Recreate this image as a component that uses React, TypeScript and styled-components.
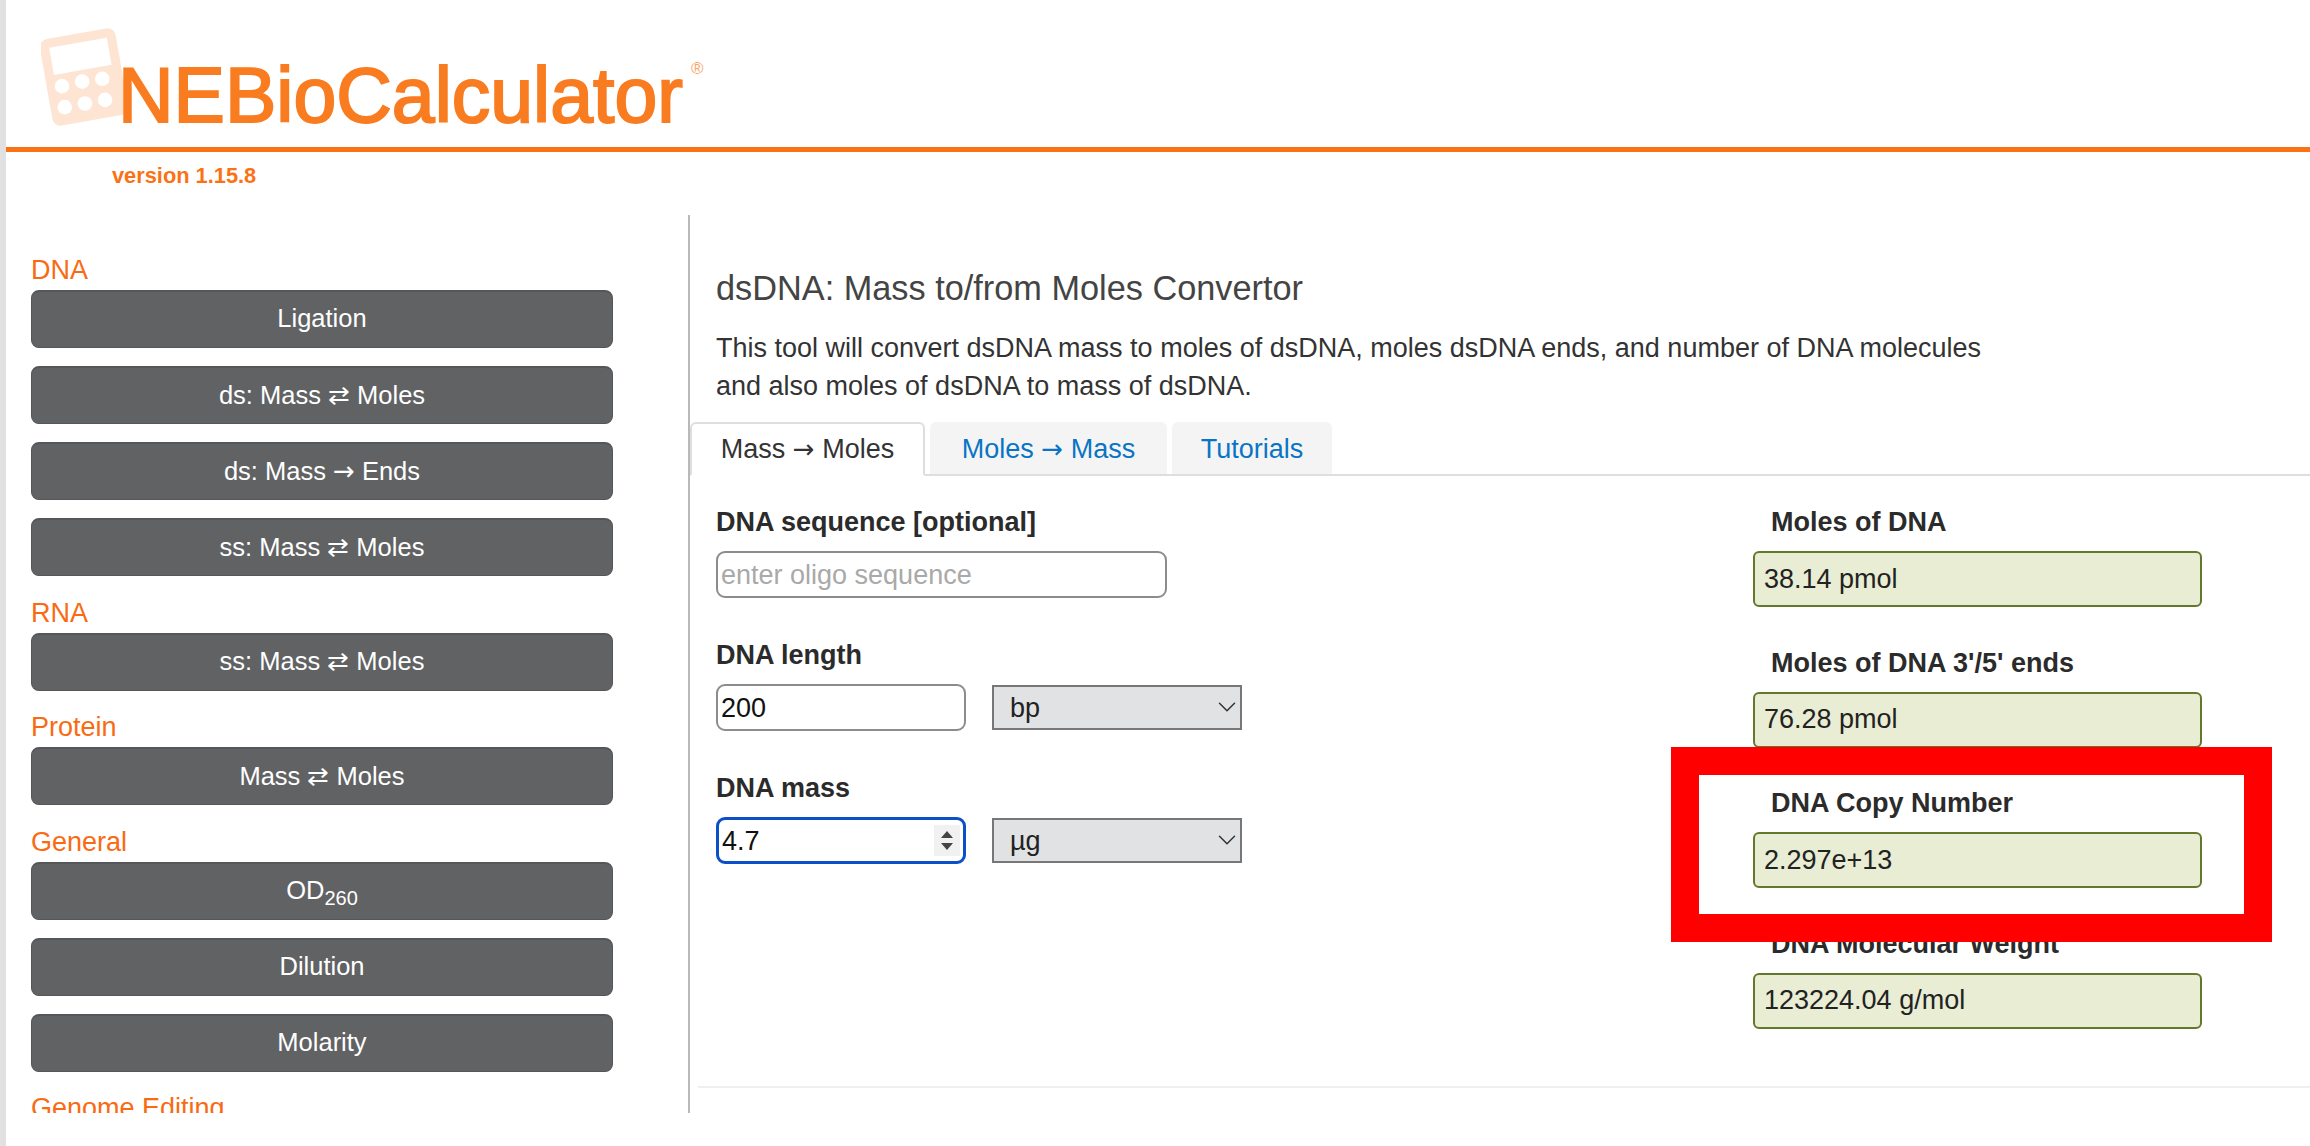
import React from 'react'
import styled, { createGlobalStyle } from 'styled-components'
import { ChevronDown } from 'lucide-react'

const GlobalStyle = createGlobalStyle`
  html, body {
    margin: 0;
    padding: 0;
    background: #fff;
  }

  * {
    box-sizing: border-box;
  }
`

const Page = styled.div`
  position: relative;
  width: 2310px;
  height: 1146px;
  overflow: hidden;
  border-left: 6px solid #e1e1e1;
  font-family: 'Liberation Sans', Arial, sans-serif;
  font-size: 27px;
  color: #333;
`

const Header = styled.header`
  position: relative;
  height: 152px;
  padding: 52px 0 0 112px;
  border-bottom: 5px solid #f97316;
`

const LogoMark = styled.svg`
  position: absolute;
  left: 35px;
  top: 28px;
  width: 86px;
  height: 98px;
`

const LogoText = styled.div`
  position: relative;
  display: inline-block;
  font-size: 77px;
  line-height: 87px;
  color: #f97c20;
  -webkit-text-stroke: 2px #f97c20;

  sup {
    position: absolute;
    left: 100%;
    top: 8px;
    margin-left: 8px;
    font-size: 17px;
    line-height: 18px;
    color: #f9a56a;
    -webkit-text-stroke: 0;
  }
`

const Version = styled.div`
  height: 63px;
  padding: 11px 0 0 106px;
  font-size: 21.8px;
  line-height: 26px;
  font-weight: bold;
  color: #f97316;
`

const Columns = styled.div`
  display: flex;
`

const Sidebar = styled.nav`
  flex: none;
  width: 684px;
  height: 898px;
  overflow: hidden;
  padding: 40px 0 0 25px;
  border-right: 2px solid #b9b9b9;
`

const GroupTitle = styled.div`
  height: 35px;
  font-size: 27px;
  line-height: 30px;
  color: #f96a12;
`

const NavGroup = styled.div`
  margin-bottom: 21.5px;
`

const NavButton = styled.div`
  display: flex;
  align-items: center;
  justify-content: center;
  width: 582px;
  height: 58px;
  margin-bottom: 18px;
  padding-bottom: 2px;
  border: 1px solid #55565a;
  border-top-width: 2px;
  border-radius: 8px;
  background: #616264;
  color: #fff;
  font-size: 25.5px;

  &:last-child {
    margin-bottom: 0;
  }

  sub {
    font-size: 20px;
    line-height: 0;
    vertical-align: -6px;
  }
`

const Main = styled.main`
  flex: 1;
  min-width: 0;
  padding-top: 54px;
`

const Intro = styled.div`
  padding-left: 26px;
`

const Title = styled.h1`
  margin: 0 0 22px;
  font-size: 34.3px;
  line-height: 38px;
  font-weight: normal;
  color: #444;
`

const Lead = styled.p`
  margin: 0;
  width: 1320px;
  font-size: 27px;
  line-height: 38px;
  color: #333;
`

const TabBar = styled.div`
  display: flex;
  gap: 5px;
  height: 54px;
  margin-top: 17px;
  border-bottom: 2px solid #dedede;
`

const Tab = styled.div<{ $active?: boolean; $width: number }>`
  display: flex;
  align-items: center;
  justify-content: center;
  width: ${p => p.$width}px;
  height: ${p => (p.$active ? 54 : 52)}px;
  border: 2px solid ${p => (p.$active ? '#dedede' : '#f4f4f4')};
  border-bottom: ${p => (p.$active ? '2px solid #fff' : 'none')};
  border-radius: 6px 6px 0 0;
  background: ${p => (p.$active ? '#fff' : '#f4f4f4')};
  color: ${p => (p.$active ? '#333' : '#0a74c4')};
  font-size: 27px;
`

const Arrow = styled.span`
  font-family: 'DejaVu Sans', sans-serif;
  font-size: 26px;
`

const Panel = styled.div`
  display: flex;
  justify-content: space-between;
  padding: 30px 0 57px 27px;
  border-bottom: 2px solid #efefef;
  margin-left: 8px;
`

const FormColumn = styled.div`
  display: flex;
  flex-direction: column;
  gap: 41px;
  margin-left: -9px;
`

const ResultColumn = styled.div`
  display: flex;
  flex-direction: column;
  gap: 39.5px;
  width: 557px;
`

const FieldLabel = styled.div<{ $indent?: boolean }>`
  height: 30px;
  margin-bottom: 15px;
  padding-top: 1px;
  padding-left: ${p => (p.$indent ? 18 : 0)}px;
  font-size: 27px;
  line-height: 30px;
  font-weight: bold;
  color: #2b2b2b;
`

const InputRow = styled.div`
  display: flex;
  align-items: center;
  gap: 26px;
`

const InputBox = styled.div`
  position: relative;
  flex: none;
`

const TextInput = styled.input<{ $width: number; $focused?: boolean }>`
  display: block;
  width: ${p => p.$width}px;
  height: 47px;
  padding: 2px 3px 0;
  border: ${p => (p.$focused ? '3px solid #0b50c8' : '2px solid #8c8c8c')};
  border-radius: 9px;
  outline: none;
  background: #fff;
  font-family: inherit;
  font-size: 27px;
  color: #111;

  &::placeholder {
    color: #a9a9a9;
    opacity: 1;
  }
`

const Spinner = styled.svg`
  position: absolute;
  right: 6px;
  top: 8px;
  width: 26px;
  height: 31px;
`

const SelectBox = styled.div`
  position: relative;
  width: 250px;
  height: 45px;

  svg {
    position: absolute;
    right: 0;
    top: 7px;
    color: #333;
    pointer-events: none;
  }
`

const UnitSelect = styled.select`
  display: block;
  width: 100%;
  height: 100%;
  padding: 0 0 0 16px;
  border: 2px solid #777;
  border-radius: 0;
  outline: none;
  appearance: none;
  background: #e1e2e3;
  font-family: inherit;
  font-size: 27px;
  color: #222;
`

const ResultField = styled.div`
  display: flex;
  align-items: center;
  width: 449px;
  height: 56px;
  padding-left: 9px;
  border: 2px solid #64782d;
  border-radius: 6px;
  background: #e8edd3;
  font-size: 27px;
  color: #222;
`

const Highlight = styled.div`
  position: absolute;
  left: 1665px;
  top: 747px;
  width: 601px;
  height: 195px;
  border: 28px solid #ff0000;
  pointer-events: none;
`

const BOTH = '\u21C4'
const TO = '\u2192'

const navGroups = [
  {
    title: 'DNA',
    items: ['Ligation', `ds: Mass ${BOTH} Moles`, `ds: Mass ${TO} Ends`, `ss: Mass ${BOTH} Moles`],
  },
  { title: 'RNA', items: [`ss: Mass ${BOTH} Moles`] },
  { title: 'Protein', items: [`Mass ${BOTH} Moles`] },
  { title: 'General', items: ['OD260', 'Dilution', 'Molarity'] },
  { title: 'Genome Editing', items: [] },
]

const results = [
  { label: 'Moles of DNA', value: '38.14 pmol' },
  { label: "Moles of DNA 3'/5' ends", value: '76.28 pmol' },
  { label: 'DNA Copy Number', value: '2.297e+13' },
  { label: 'DNA Molecular Weight', value: '123224.04 g/mol' },
]

const navLabel = (item: string) => {
  if (item === 'OD260') {
    return (
      <span>
        OD<sub>260</sub>
      </span>
    )
  }
  if (item.includes(TO)) {
    const [before, after] = item.split(TO)
    return (
      <span>
        {before}
        <Arrow>{TO}</Arrow>
        {after}
      </span>
    )
  }
  return item
}

const Unit: React.FC<{ value: string }> = ({ value }) => (
  <SelectBox>
    <UnitSelect value={value} onChange={() => undefined}>
      <option value={value}>{value}</option>
    </UnitSelect>
    <ChevronDown size={30} strokeWidth={1.2} />
  </SelectBox>
)

const App: React.FC = () => {
  return (
    <Page>
      <GlobalStyle />

      <Header>
        <LogoMark viewBox='0 0 94 106'>
          <g transform='rotate(-10 47 53)' fill='#fde4d3'>
            <path
              fillRule='evenodd'
              d='M14 5h66a9 9 0 0 1 9 9v78a9 9 0 0 1-9 9H14a9 9 0 0 1-9-9V14a9 9 0 0 1 9-9zm1 10v30h64V15z'
            />
          </g>
          <g fill='#fff'>
            <circle cx='23' cy='63' r='8' />
            <circle cx='45' cy='58' r='8' />
            <circle cx='67' cy='55' r='8' />
            <circle cx='26' cy='86' r='8' />
            <circle cx='48' cy='82' r='8' />
            <circle cx='70' cy='78' r='8' />
          </g>
        </LogoMark>
        <LogoText>
          NEBioCalculator<sup>®</sup>
        </LogoText>
      </Header>

      <Version>version 1.15.8</Version>

      <Columns>
        <Sidebar>
          {navGroups.map(group => (
            <NavGroup key={group.title}>
              <GroupTitle>{group.title}</GroupTitle>
              {group.items.map(item => (
                <NavButton key={item}>{navLabel(item)}</NavButton>
              ))}
            </NavGroup>
          ))}
        </Sidebar>

        <Main>
          <Intro>
            <Title>dsDNA: Mass to/from Moles Convertor</Title>
            <Lead>
              This tool will convert dsDNA mass to moles of dsDNA, moles dsDNA ends, and number of DNA molecules
              <br />
              and also moles of dsDNA to mass of dsDNA.
            </Lead>
          </Intro>

          <TabBar>
            <Tab $active $width={235}>
              <span>
                Mass <Arrow>{TO}</Arrow> Moles
              </span>
            </Tab>
            <Tab $width={237}>
              <span>
                Moles <Arrow>{TO}</Arrow> Mass
              </span>
            </Tab>
            <Tab $width={160}>Tutorials</Tab>
          </TabBar>

          <Panel>
            <FormColumn>
              <div>
                <FieldLabel>DNA sequence [optional]</FieldLabel>
                <InputRow>
                  <TextInput $width={451} placeholder='enter oligo sequence' />
                </InputRow>
              </div>
              <div>
                <FieldLabel>DNA length</FieldLabel>
                <InputRow>
                  <TextInput $width={250} defaultValue='200' />
                  <Unit value='bp' />
                </InputRow>
              </div>
              <div>
                <FieldLabel>DNA mass</FieldLabel>
                <InputRow>
                  <InputBox>
                    <TextInput $width={250} $focused defaultValue='4.7' />
                    <Spinner viewBox='0 0 26 31'>
                      <rect width='26' height='31' fill='#f1f1f1' />
                      <path d='M13 6l6 7H7z' fill='#444' />
                      <path d='M13 25l6-7H7z' fill='#444' />
                    </Spinner>
                  </InputBox>
                  <Unit value='µg' />
                </InputRow>
              </div>
            </FormColumn>

            <ResultColumn>
              {results.map(result => (
                <div key={result.label}>
                  <FieldLabel $indent>{result.label}</FieldLabel>
                  <ResultField>{result.value}</ResultField>
                </div>
              ))}
            </ResultColumn>
          </Panel>
        </Main>
      </Columns>

      <Highlight />
    </Page>
  )
}

export default App
